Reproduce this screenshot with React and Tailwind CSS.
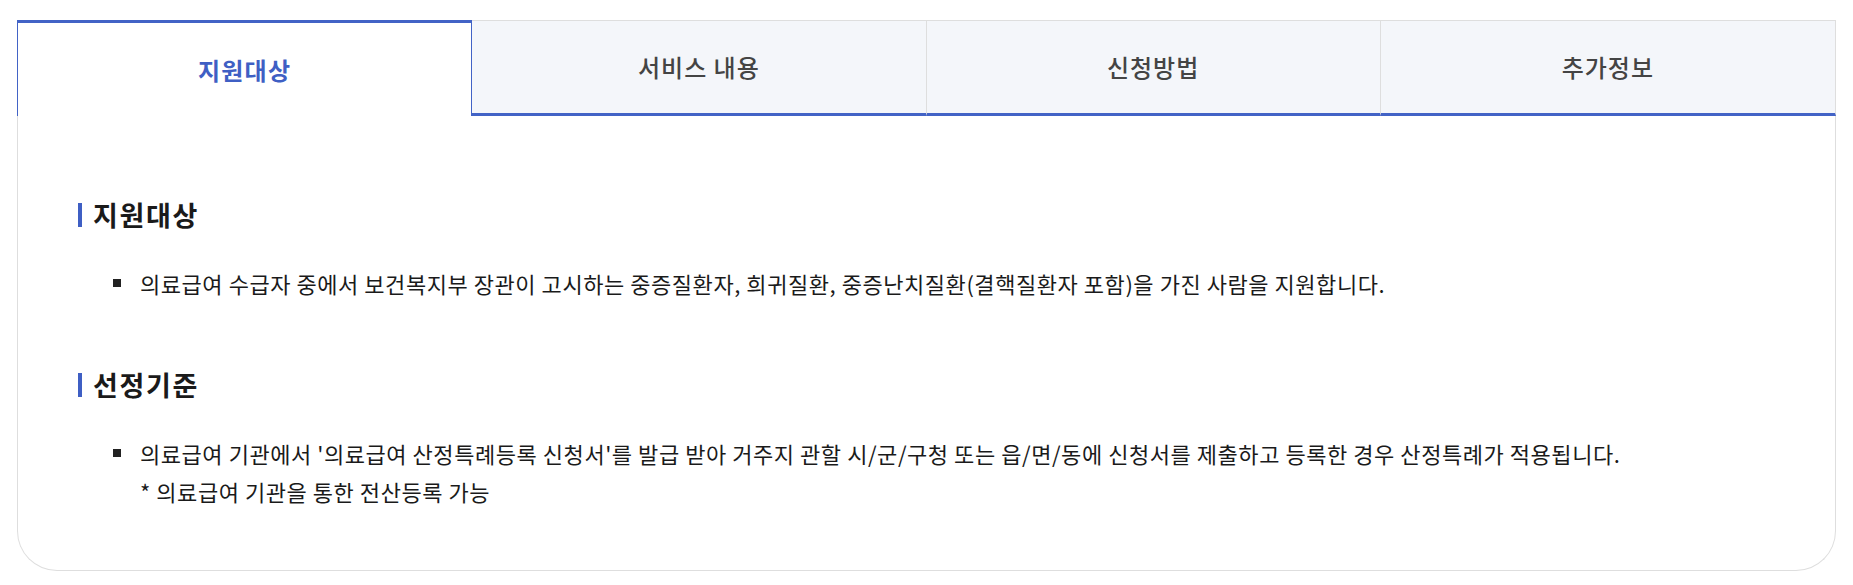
export default function App() {
  const tabs = ["지원대상", "서비스 내용", "신청방법", "추가정보"];
  const font = { fontFamily: '"Noto Sans CJK KR", "Noto Sans", sans-serif' };
  return (
    <div className="bg-white w-[1853px] h-[585px] px-[17px] pt-[20px]" style={font}>
      <div className="border-x border-b border-[#dedede] rounded-b-[40px] bg-white">
        <div className="grid grid-cols-4 h-[96px]">
          {tabs.map((t, i) =>
            i === 0 ? (
              <div
                key={t}
                className="flex items-center justify-center bg-white border-t-[3px] border-l border-r border-[#4263c6] -ml-px text-[24px] font-bold text-[#3f5fc4] tracking-[1.2px]"
              >
                {t}
              </div>
            ) : (
              <div
                key={t}
                className={`flex items-center justify-center bg-[#f4f6fa] border-t border-[#dedede] border-b-[3px] border-b-[#4263c6] text-[24px] font-medium text-[#444] tracking-[1px] ${i === 3 ? "-mr-px border-r" : "border-r"}`}
              >
                {t}
              </div>
            )
          )}
        </div>
        <div className="pl-[60px] pr-[40px] pt-[83px] pb-[60px] text-[#1a1a1a]">
          <h3 className="flex items-center text-[27px] font-bold leading-[32px] tracking-[1.7px]">
            <span className="w-[4px] h-[24px] bg-[#3f5fc4] mr-[11px]" />
            지원대상
          </h3>
          <ul className="mt-[33px] pl-[35px]">
            <li className="flex text-[22px] leading-[38px] tracking-[0.55px]">
              <span className="w-[8px] h-[8px] bg-[#222] mt-[15px] mr-[19px] shrink-0" />
              <span>
                의료급여 수급자 중에서 보건복지부 장관이 고시하는 중증질환자, 희귀질환, 중증난치질환(결핵질환자 포함)을 가진 사람을 지원합니다.
              </span>
            </li>
          </ul>
          <h3 className="flex items-center text-[27px] font-bold leading-[32px] tracking-[1.7px] mt-[67px]">
            <span className="w-[4px] h-[24px] bg-[#3f5fc4] mr-[11px]" />
            선정기준
          </h3>
          <ul className="mt-[33px] pl-[35px]">
            <li className="flex text-[22px] leading-[38px] tracking-[0.55px]">
              <span className="w-[8px] h-[8px] bg-[#222] mt-[15px] mr-[19px] shrink-0" />
              <span>
                의료급여 기관에서 '의료급여 산정특례등록 신청서'를 발급 받아 거주지 관할 시/군/구청 또는 읍/면/동에 신청서를 제출하고 등록한 경우 산정특례가 적용됩니다.
                <br />* 의료급여 기관을 통한 전산등록 가능
              </span>
            </li>
          </ul>
        </div>
      </div>
    </div>
  );
}
